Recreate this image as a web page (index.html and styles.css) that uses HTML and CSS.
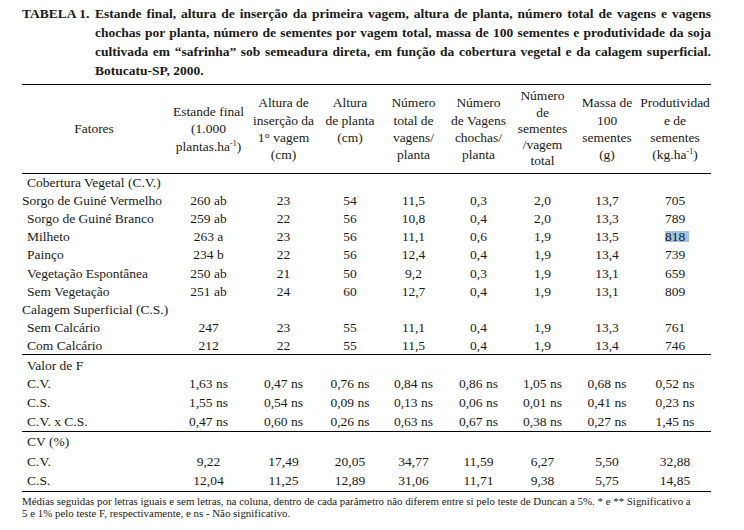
FILE: index.html
```html
<!DOCTYPE html>
<html lang="pt">
<head>
<meta charset="utf-8">
<title>Tabela 1</title>
<link rel="stylesheet" href="styles.css">
</head>
<body>
<div class="page">
  <div class="caption">
    <span class="label">TABELA 1.</span>
    <div class="caption-lines">
      <span class="cl just">Estande final, altura de inserção da primeira vagem, altura de planta, número total de vagens e vagens</span>
      <span class="cl just">chochas por planta, número de sementes por vagem total, massa de 100 sementes e produtividade da soja</span>
      <span class="cl just">cultivada em “safrinha” sob semeadura direta, em função da cobertura vegetal e da calagem superficial.</span>
      <span class="cl">Botucatu-SP, 2000.</span>
    </div>
  </div>

  <table class="data">
    <colgroup>
      <col class="c0"><col class="c1"><col class="c2"><col class="c3"><col class="c4"><col class="c5"><col class="c6"><col class="c7"><col class="c8">
    </colgroup>
    <thead>
      <tr class="head">
        <th class="h-fat">Fatores</th>
        <th>Estande final<br>(1.000<br>plantas.ha<sup>-1</sup>)</th>
        <th>Altura de<br>inserção da<br>1° vagem<br>(cm)</th>
        <th class="h-up">Altura<br>de planta<br>(cm)</th>
        <th>Número<br>total de<br>vagens/<br>planta</th>
        <th>Número<br>de Vagens<br>chochas/<br>planta</th>
        <th class="h-tight">Número<br>de<br>sementes<br>/vagem<br>total</th>
        <th>Massa de<br>100<br>sementes<br>(g)</th>
        <th>Produtividad<br>e de<br>sementes<br>(kg.ha<sup>-1</sup>)</th>
      </tr>
    </thead>
    <tbody class="sec s1">
      <tr><td class="f">Cobertura Vegetal (C.V.)</td><td></td><td></td><td></td><td></td><td></td><td></td><td></td><td></td></tr>
      <tr><td class="f f0">Sorgo de Guiné Vermelho</td><td>260 ab</td><td>23</td><td>54</td><td>11,5</td><td>0,3</td><td>2,0</td><td>13,7</td><td>705</td></tr>
      <tr><td class="f">Sorgo de Guiné Branco</td><td>259 ab</td><td>22</td><td>56</td><td>10,8</td><td>0,4</td><td>2,0</td><td>13,3</td><td>789</td></tr>
      <tr><td class="f">Milheto</td><td>263 a</td><td>23</td><td>56</td><td>11,1</td><td>0,6</td><td>1,9</td><td>13,5</td><td><span class="sel">818</span></td></tr>
      <tr><td class="f">Painço</td><td>234 b</td><td>22</td><td>56</td><td>12,4</td><td>0,4</td><td>1,9</td><td>13,4</td><td>739</td></tr>
      <tr><td class="f">Vegetação Espontânea</td><td>250 ab</td><td>21</td><td>50</td><td>9,2</td><td>0,3</td><td>1,9</td><td>13,1</td><td>659</td></tr>
      <tr><td class="f">Sem Vegetação</td><td>251 ab</td><td>24</td><td>60</td><td>12,7</td><td>0,4</td><td>1,9</td><td>13,1</td><td>809</td></tr>
      <tr><td class="f f0">Calagem Superficial (C.S.)</td><td></td><td></td><td></td><td></td><td></td><td></td><td></td><td></td></tr>
      <tr><td class="f">Sem Calcário</td><td>247</td><td>23</td><td>55</td><td>11,1</td><td>0,4</td><td>1,9</td><td>13,3</td><td>761</td></tr>
      <tr><td class="f">Com Calcário</td><td>212</td><td>22</td><td>55</td><td>11,5</td><td>0,4</td><td>1,9</td><td>13,4</td><td>746</td></tr>
    </tbody>
    <tbody class="sec s2">
      <tr><td class="f">Valor de F</td><td></td><td></td><td></td><td></td><td></td><td></td><td></td><td></td></tr>
      <tr><td class="f">C.V.</td><td>1,63 ns</td><td>0,47 ns</td><td>0,76 ns</td><td>0,84 ns</td><td>0,86 ns</td><td>1,05 ns</td><td>0,68 ns</td><td>0,52 ns</td></tr>
      <tr><td class="f">C.S.</td><td>1,55 ns</td><td>0,54 ns</td><td>0,09 ns</td><td>0,13 ns</td><td>0,06 ns</td><td>0,01 ns</td><td>0,41 ns</td><td>0,23 ns</td></tr>
      <tr><td class="f">C.V. x C.S.</td><td>0,47 ns</td><td>0,60 ns</td><td>0,26 ns</td><td>0,63 ns</td><td>0,67 ns</td><td>0,38 ns</td><td>0,27 ns</td><td>1,45 ns</td></tr>
    </tbody>
    <tbody class="sec s3">
      <tr><td class="f">CV (%)</td><td></td><td></td><td></td><td></td><td></td><td></td><td></td><td></td></tr>
      <tr><td class="f">C.V.</td><td>9,22</td><td>17,49</td><td>20,05</td><td>34,77</td><td>11,59</td><td>6,27</td><td>5,50</td><td>32,88</td></tr>
      <tr><td class="f">C.S.</td><td>12,04</td><td>11,25</td><td>12,89</td><td>31,06</td><td>11,71</td><td>9,38</td><td>5,75</td><td>14,85</td></tr>
    </tbody>
  </table>

  <p class="note">Médias seguidas por letras iguais e sem letras, na coluna, dentro de cada parâmetro não diferem entre si pelo teste de Duncan a 5%. * e ** Significativo a<br>5 e 1% pelo teste F, respectivamente, e ns - Não significativo.</p>
</div>
</body>
</html>
```

FILE: styles.css
```css
html, body {
  margin: 0;
  padding: 0;
  background: #ffffff;
}

body {
  font-family: "Liberation Serif", "Times New Roman", serif;
  color: #1a1a1a;
}

.page {
  padding: 4px 0 0 22px;
  width: 689px;
}

.caption {
  display: flex;
  font-weight: bold;
  font-size: 13.5px;
  line-height: 19px;
}

.label {
  flex: 0 0 73px;
  white-space: nowrap;
}

.caption-lines {
  flex: 1 1 auto;
  display: flex;
  flex-direction: column;
}

.cl {
  display: block;
  white-space: nowrap;
}

.cl.just {
  white-space: normal;
  text-align: justify;
  text-align-last: justify;
}

.data {
  margin-top: 4px;
  width: 689px;
  border-collapse: collapse;
  table-layout: fixed;
  font-size: 13.5px;
}

.c0 { width: 148px; }
.c1 { width: 77px; }
.c2 { width: 73px; }
.c3 { width: 60px; }
.c4 { width: 67px; }
.c5 { width: 63px; }
.c6 { width: 65px; }
.c7 { width: 64px; }
.c8 { width: 72px; }

.data th {
  font-weight: normal;
  text-align: center;
  vertical-align: middle;
  padding: 0;
  line-height: 17.4px;
  white-space: nowrap;
}

.head {
  height: 89px;
}

.head th {
  border-top: 1px solid #000;
  border-bottom: 1px solid #000;
}

.data th.h-fat {
  padding-right: 4px;
}

.data th.h-up {
  padding-bottom: 17px;
}

.data th.h-tight {
  line-height: 16.25px;
}

sup {
  font-size: 8px;
  line-height: 0;
  vertical-align: 5px;
}

.data td {
  padding: 0;
  text-align: center;
  white-space: nowrap;
  line-height: 15px;
}

.data td.f {
  text-align: left;
  padding-left: 5px;
}

.data td.f0 {
  padding-left: 0;
}

.s1 tr { height: 18.1px; }
.s2 tr { height: 19.25px; }
.s3 tr { height: 19.9px; }

.sec {
  border-bottom: 1px solid #000;
}

.s2 tr:first-child td {
  padding-top: 2px;
}

.sel {
  background: #9fc4e6;
  padding-right: 4px;
  margin-right: -4px;
  line-height: 11px;
  display: inline-block;
}

.note {
  margin: 3px 0 0 0;
  font-size: 10.9px;
  line-height: 12px;
  white-space: nowrap;
}
```
